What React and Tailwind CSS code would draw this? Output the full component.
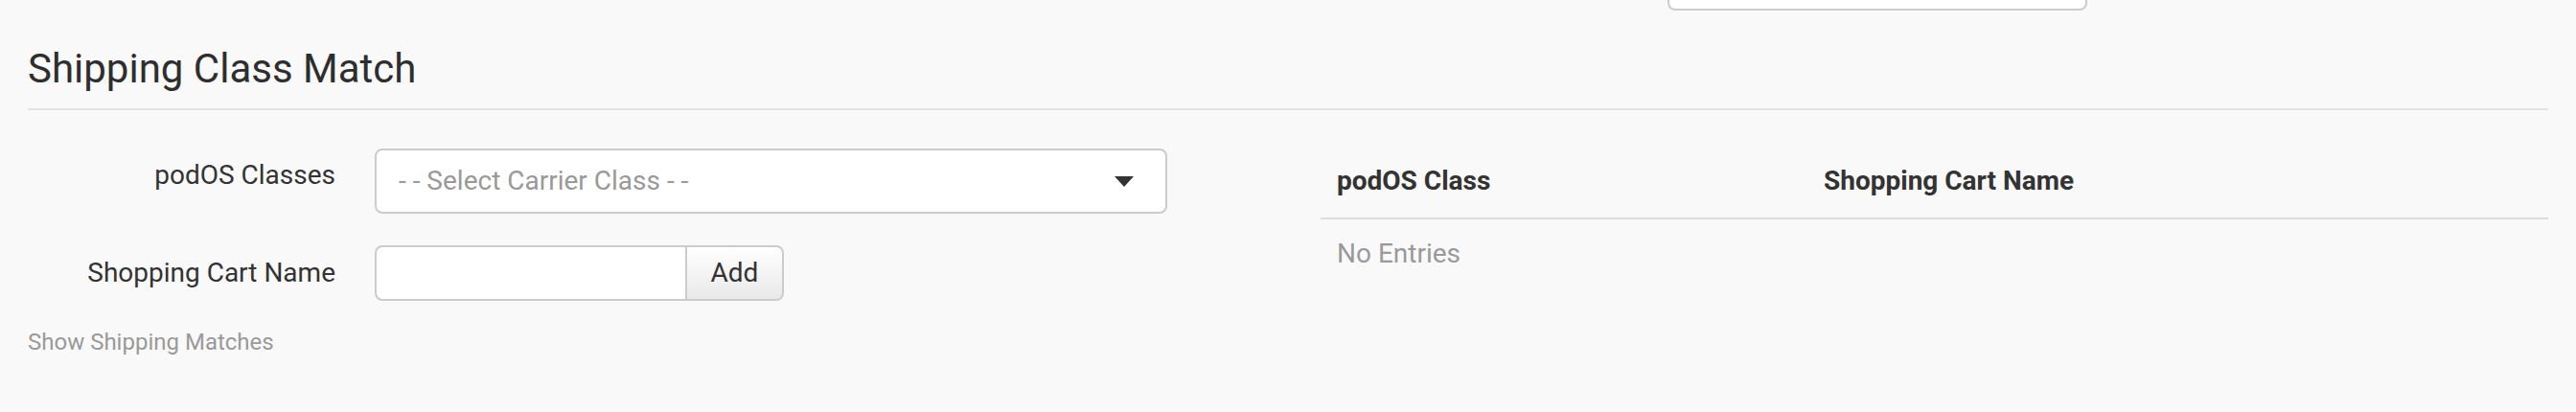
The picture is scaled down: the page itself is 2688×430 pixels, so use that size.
import React from "react";

export default function App() {
  return (
    <div className="min-h-[430px] w-full bg-[#f9f9f9] font-['Roboto',sans-serif] text-[#333]">
      <div className="ml-[1740px] h-[11px] w-[438px] rounded-b-[8px] border-2 border-t-0 border-[#cccccc] bg-white" />
      <div className="px-[29px]">
        <h3 className="mt-[38px] text-[42px] leading-[46px] font-normal text-[#2e2e2e]">
          Shipping Class Match
        </h3>
        <div className="mt-[18px] h-[2px] bg-[#e3e3e3]" />
        <div className="mt-[40px] flex items-start">
          <div className="w-[1349px] shrink-0">
            <div className="flex items-start">
              <div className="w-[321px] pt-[8px] text-right text-[28px] leading-[40px]">
                podOS Classes
              </div>
              <div className="ml-[41px] flex h-[68px] w-[827px] items-center justify-between rounded-[8px] border-2 border-[#cccccc] bg-white pl-[23px] pr-[33px]">
                <span className="text-[28px] leading-[40px] text-[#999]">
                  - - Select Carrier Class - -
                </span>
                <svg width="20" height="11" viewBox="0 0 20 11">
                  <path d="M0 0 L20 0 L10 11 Z" fill="#333" />
                </svg>
              </div>
            </div>
            <div className="mt-[33px] flex items-center">
              <div className="w-[321px] text-right text-[28px] leading-[40px]">
                Shopping Cart Name
              </div>
              <div className="ml-[41px] flex h-[58px]">
                <div className="w-[326px] rounded-l-[8px] border-2 border-[#cccccc] bg-white" />
                <div className="flex w-[101px] items-center justify-center rounded-r-[8px] border-2 border-l-0 border-[#cccccc] bg-linear-to-b from-white to-[#e9e9e9] text-[28px] leading-[40px] text-[#333]">
                  Add
                </div>
              </div>
            </div>
            <div className="mt-[27px] text-[24px] leading-[32px] text-[#999]">
              Show Shipping Matches
            </div>
          </div>
          <div className="flex-1">
            <div className="grid grid-cols-[508px_1fr] border-b-2 border-[#dddddd] pt-[14px] pb-[18px] text-[28px] leading-[40px] font-bold text-[#333]">
              <div className="pl-[17px]">podOS Class</div>
              <div className="pl-[17px]">Shopping Cart Name</div>
            </div>
            <div className="pl-[17px] pt-[16px] text-[28px] leading-[40px] text-[#999]">
              No Entries
            </div>
          </div>
        </div>
      </div>
    </div>
  );
}
